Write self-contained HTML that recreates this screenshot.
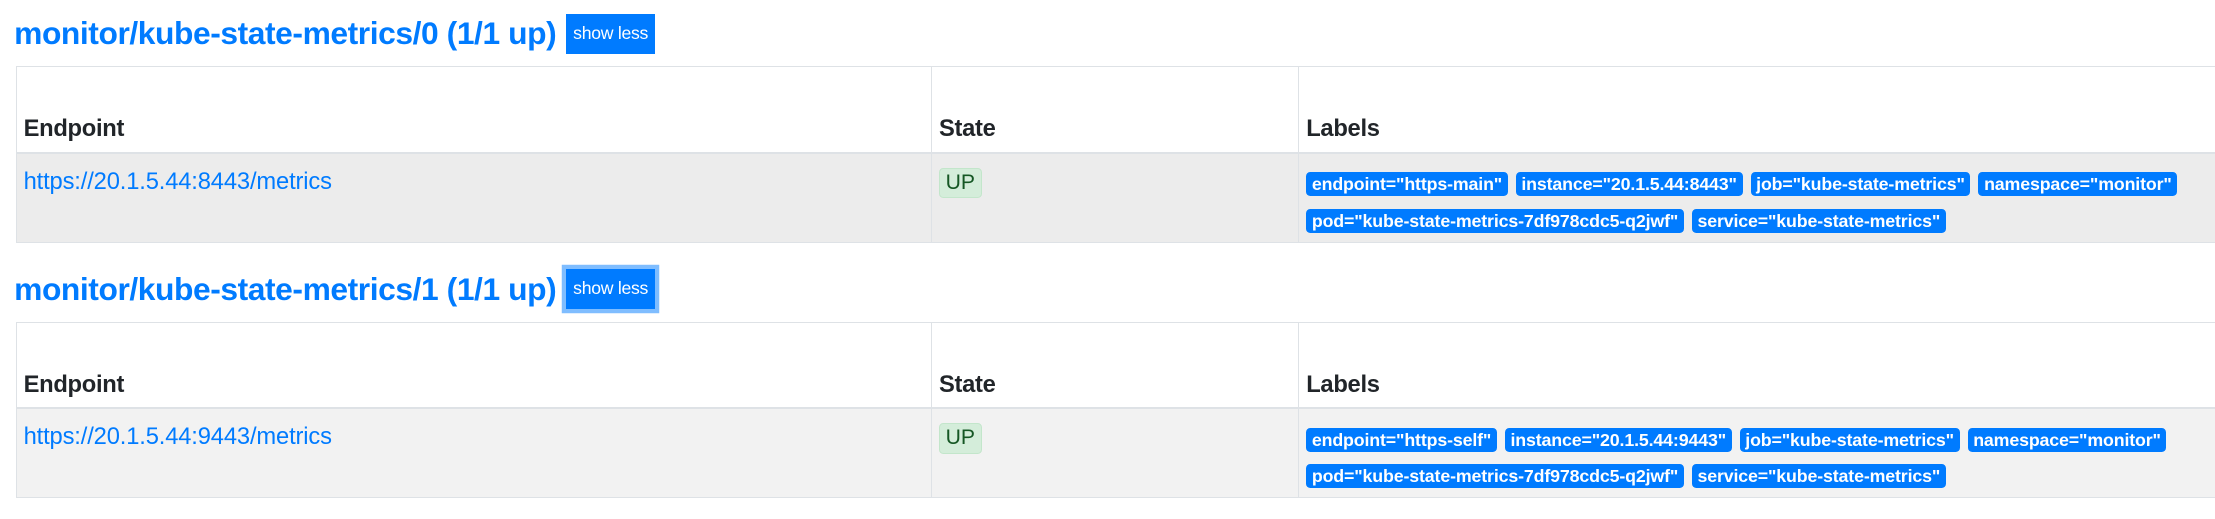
<!DOCTYPE html>
<html><head><meta charset="utf-8"><style>
html,body{margin:0;padding:0;background:#fff;overflow:hidden;width:2215px;height:519px}
#w{zoom:1.4126;font-family:"Liberation Sans",sans-serif;color:#212529;padding:0 0 0 10px;width:1700px}
h2{font-size:22.5px;font-weight:bold;color:#007bff;margin:0;display:flex;align-items:center;height:28px;letter-spacing:-0.3px}
.h1{margin-top:10px}
.h2{margin-top:19px}
.btn{display:inline-block;background:#007bff;color:#fff;font-size:12.5px;font-weight:normal;padding:0 5px;height:28px;line-height:28px;margin-left:7px;letter-spacing:-0.2px}
.btn.f{box-shadow:0 0 0 3px rgba(0,123,255,.5)}
table{border-collapse:collapse;table-layout:fixed;width:1700px;margin-left:1px;font-size:16.8px}
.t1{margin-top:9px}
.t2{margin-top:9px}
th,td{box-sizing:border-box;border:1px solid #dee2e6;padding:0 5px;text-align:left;vertical-align:top}
th{height:61px;vertical-align:bottom;padding-bottom:6px;border-bottom:2px solid #dee2e6;font-weight:bold;letter-spacing:-0.2px;line-height:20px}
td{height:63px;padding-top:10px;line-height:20px}
tr.a td{background:#ececec}
tr.b td{background:#f2f2f2}
a{color:#007bff;text-decoration:none;letter-spacing:-0.1px}
.up{display:inline-block;background:#d4edda;border:1px solid #c3e6cb;color:#155724;border-radius:3px;padding:0 4px;font-size:15px;line-height:20px}
.bd{display:inline-block;background:#007bff;color:#fff;font-size:12.6px;font-weight:bold;border-radius:3px;padding:0 4px;height:17px;line-height:17px;margin:0 1px 0 0;letter-spacing:-0.1px;white-space:nowrap;vertical-align:top}
td.l{padding-top:13px;padding-left:5px}
.r{display:block;height:17px;margin-bottom:9px;white-space:nowrap}
</style></head><body><div id="w">
<h2 class="h1">monitor/kube-state-metrics/0 (1/1 up)<span class="btn">show less</span></h2>
<table class="t1"><colgroup><col style="width:648px"><col style="width:260px"><col></colgroup>
<tr><th>Endpoint</th><th>State</th><th>Labels</th></tr>
<tr class="a"><td><a>https://20.1.5.44:8443/metrics</a></td><td><span class="up">UP</span></td><td class="l" style="line-height:0"><div class="r"><span class="bd">endpoint="https-main"</span> <span class="bd">instance="20.1.5.44:8443"</span> <span class="bd">job="kube-state-metrics"</span> <span class="bd">namespace="monitor"</span></div><div class="r" style="margin:0"><span class="bd">pod="kube-state-metrics-7df978cdc5-q2jwf"</span> <span class="bd">service="kube-state-metrics"</span></div></td></tr>
</table>
<h2 class="h2">monitor/kube-state-metrics/1 (1/1 up)<span class="btn f">show less</span></h2>
<table class="t2"><colgroup><col style="width:648px"><col style="width:260px"><col></colgroup>
<tr><th>Endpoint</th><th>State</th><th>Labels</th></tr>
<tr class="b"><td><a>https://20.1.5.44:9443/metrics</a></td><td><span class="up">UP</span></td><td class="l" style="line-height:0"><div class="r"><span class="bd">endpoint="https-self"</span> <span class="bd">instance="20.1.5.44:9443"</span> <span class="bd">job="kube-state-metrics"</span> <span class="bd">namespace="monitor"</span></div><div class="r" style="margin:0"><span class="bd">pod="kube-state-metrics-7df978cdc5-q2jwf"</span> <span class="bd">service="kube-state-metrics"</span></div></td></tr>
</table>
</div></body></html>
